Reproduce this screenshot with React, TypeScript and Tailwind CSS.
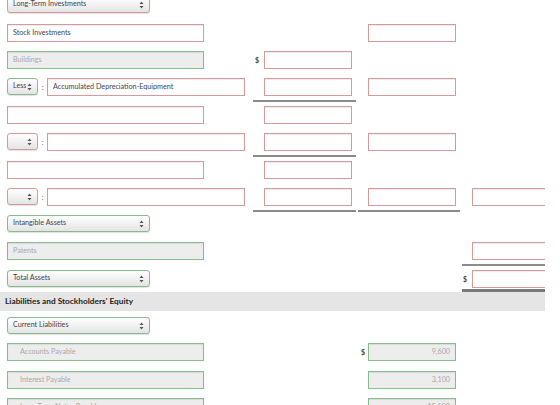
import React from "react";

type Tone = "red" | "green";

const font = { fontFamily: "Lato, 'Open Sans', sans-serif" };

function Arrows() {
  return (
    <svg width="5" height="8" viewBox="0 0 5 8" className="shrink-0">
      <path d="M2.5 0.5 L4.5 3 L0.5 3 Z" fill="#555" />
      <path d="M2.5 7.5 L4.5 5 L0.5 5 Z" fill="#555" />
    </svg>
  );
}

function Select({ label, tone, width }: { label?: string; tone: Tone; width: string }) {
  return (
    <div
      className={`flex h-[17px] shrink-0 items-center justify-between rounded-[3px] border bg-gradient-to-b from-white to-[#e4e4e4] pl-[5px] pr-[5px] text-[7.2px] text-[#444] shadow-[0_1px_1px_rgba(0,0,0,0.12)] ${width} ${
        tone === "red" ? "border-[#d69a9a]" : "border-[#86bb8b]"
      }`}
    >
      <span className="truncate">{label}</span>
      <Arrows />
    </div>
  );
}

function Box({
  tone,
  width,
  text,
  right,
  indent,
}: {
  tone: Tone;
  width: string;
  text?: string;
  right?: boolean;
  indent?: boolean;
}) {
  const filled = tone === "green";
  return (
    <div
      className={`flex h-[18px] shrink-0 items-center border text-[7.2px] shadow-[inset_0_1px_1px_rgba(0,0,0,0.08)] ${width} ${
        filled ? "border-[#86bb8b] bg-[#ededed] text-[#a8a8a8]" : "border-[#d69a9a] bg-white text-[#444]"
      } ${right ? "justify-end pr-[5px]" : indent ? "pl-[12px]" : "pl-[5px]"}`}
    >
      {text}
    </div>
  );
}

function Dollar() {
  return <span className="text-[7px] font-bold text-[#444]">$</span>;
}

function Col2({ dollar, line, input = true }: { dollar?: boolean; line?: boolean; input?: boolean }) {
  return (
    <div className={`flex w-[103px] shrink-0 items-start ${line ? "h-[24px] border-b-2 border-[#8a8a8a]" : ""}`}>
      <div className="flex h-[18px] w-[11px] items-center pl-[2px]">{dollar ? <Dollar /> : null}</div>
      {input ? <Box tone="red" width="w-[88px]" /> : null}
    </div>
  );
}

function Col3({
  dollar,
  line,
  tone = "red",
  value,
}: {
  dollar?: boolean;
  line?: boolean;
  tone?: Tone;
  value?: string;
}) {
  return (
    <div className={`ml-[2px] flex w-[102px] shrink-0 items-start ${line ? "h-[24px] border-b-2 border-[#8a8a8a]" : ""}`}>
      <div className="flex h-[18px] w-[10px] items-center pl-[3px]">{dollar ? <Dollar /> : null}</div>
      <Box tone={tone} width="w-[88px]" text={value} right />
    </div>
  );
}

function Col4({ dollar, line }: { dollar?: boolean; line?: "thin" | "thick" }) {
  return (
    <div
      className={`ml-[2px] flex w-[100px] shrink-0 items-start ${
        line === "thin" ? "h-[24px] border-b-2 border-[#8a8a8a]" : line === "thick" ? "h-[22px] border-b-[3px] border-[#7a7a7a]" : ""
      }`}
    >
      <div className="flex h-[18px] w-[10px] items-center pl-[1px]">{dollar ? <Dollar /> : null}</div>
      <Box tone="red" width="w-[90px]" />
    </div>
  );
}

function Left({ children }: { children?: React.ReactNode }) {
  return <div className="flex w-[253px] shrink-0 items-start pl-[7px]">{children}</div>;
}

function Row({ h, children }: { h: string; children: React.ReactNode }) {
  return <div className={`flex items-start ${h}`}>{children}</div>;
}

function Colon() {
  return <span className="flex h-[18px] w-[9px] items-center justify-center text-[7px] text-[#555]">:</span>;
}

export default function App() {
  return (
    <div className="h-[405px] w-[560px] overflow-hidden bg-white" style={font}>
      <div className="-mt-[4px] w-[545px] overflow-hidden">
        <Row h="h-[28px]">
          <Left>
            <Select label="Long-Term Investments" tone="red" width="w-[143px]" />
          </Left>
        </Row>
        <Row h="h-[27px]">
          <Left>
            <Box tone="red" width="w-[197px]" text="Stock Investments" />
          </Left>
          <Col2 input={false} />
          <Col3 />
        </Row>
        <Row h="h-[27px]">
          <Left>
            <Box tone="green" width="w-[197px]" text="Buildings" />
          </Left>
          <Col2 dollar />
        </Row>
        <Row h="h-[28px]">
          <Left>
            <Select label="Less" tone="green" width="w-[31px]" />
            <Colon />
            <Box tone="red" width="w-[198px]" text="Accumulated Depreciation-Equipment" />
          </Left>
          <Col2 line />
          <Col3 />
        </Row>
        <Row h="h-[27px]">
          <Left>
            <Box tone="red" width="w-[197px]" />
          </Left>
          <Col2 />
        </Row>
        <Row h="h-[28px]">
          <Left>
            <Select tone="red" width="w-[31px]" />
            <Colon />
            <Box tone="red" width="w-[198px]" />
          </Left>
          <Col2 line />
          <Col3 />
        </Row>
        <Row h="h-[27px]">
          <Left>
            <Box tone="red" width="w-[197px]" />
          </Left>
          <Col2 />
        </Row>
        <Row h="h-[27px]">
          <Left>
            <Select tone="red" width="w-[31px]" />
            <Colon />
            <Box tone="red" width="w-[198px]" />
          </Left>
          <Col2 line />
          <Col3 line />
          <Col4 />
        </Row>
        <Row h="h-[27px]">
          <Left>
            <Select label="Intangible Assets" tone="green" width="w-[143px]" />
          </Left>
        </Row>
        <Row h="h-[28px]">
          <Left>
            <Box tone="green" width="w-[197px]" text="Patents" />
          </Left>
          <div className="w-[207px] shrink-0" />
          <Col4 line="thin" />
        </Row>
        <Row h="h-[22px]">
          <Left>
            <Select label="Total Assets" tone="green" width="w-[143px]" />
          </Left>
          <div className="w-[207px] shrink-0" />
          <Col4 dollar line="thick" />
        </Row>
        <div className="flex h-[19px] items-center bg-[#e5e5e5] pl-[5px] text-[8.3px] font-bold text-[#222]">
          Liabilities and Stockholders' Equity
        </div>
        <div className="h-[6px]" />
        <Row h="h-[26px]">
          <Left>
            <Select label="Current Liabilities" tone="green" width="w-[143px]" />
          </Left>
        </Row>
        <Row h="h-[28px]">
          <Left>
            <Box tone="green" width="w-[197px]" text="Accounts Payable" indent />
          </Left>
          <div className="w-[103px] shrink-0" />
          <Col3 dollar tone="green" value="9,600" />
        </Row>
        <Row h="h-[27px]">
          <Left>
            <Box tone="green" width="w-[197px]" text="Interest Payable" indent />
          </Left>
          <div className="w-[103px] shrink-0" />
          <Col3 tone="green" value="3,100" />
        </Row>
        <Row h="h-[27px]">
          <Left>
            <Box tone="green" width="w-[197px]" text="Long-Term Notes Payable" indent />
          </Left>
          <div className="w-[103px] shrink-0" />
          <Col3 tone="green" value="15,100" />
        </Row>
      </div>
    </div>
  );
}
